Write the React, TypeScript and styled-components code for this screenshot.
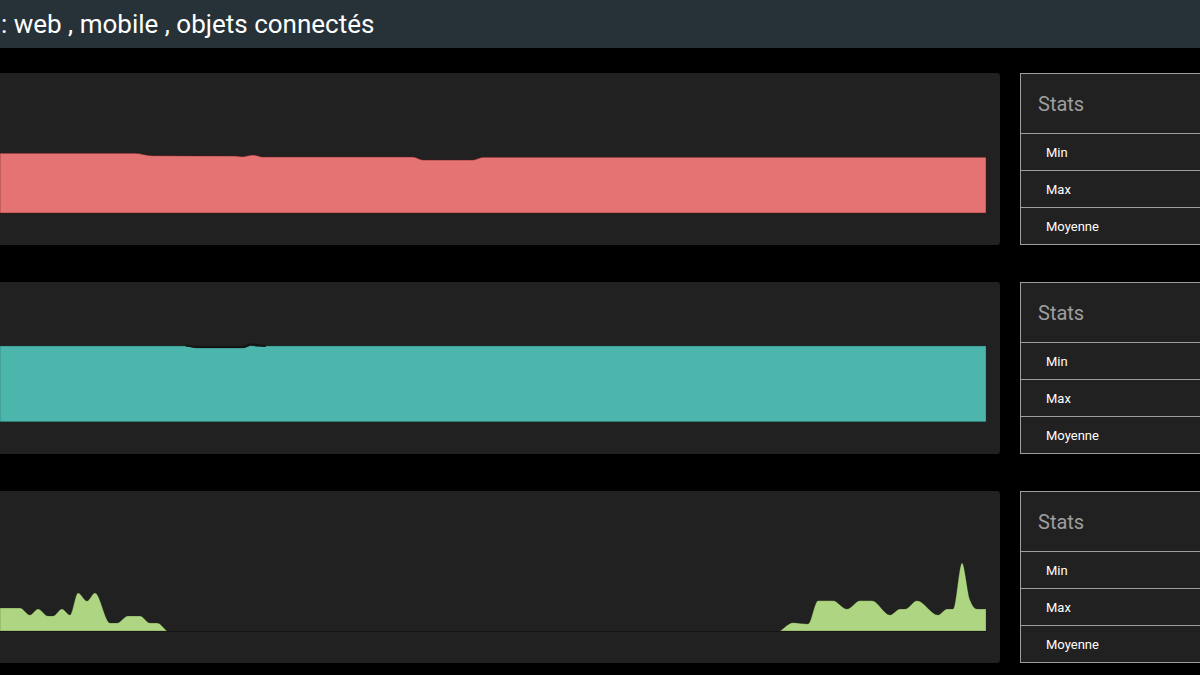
import React from "react";
import styled, { createGlobalStyle } from "styled-components";

const GlobalStyle = createGlobalStyle`
  html, body { margin: 0; padding: 0; background: #000; overflow: hidden; }
  body { font-family: Roboto, "Noto Sans", Arial, sans-serif; }
  #root { width: 1200px; height: 675px; overflow: hidden; }
`;

type Pt = [number, number];

function monotone(pts: Pt[]): string {
  const n = pts.length;
  const s: number[] = [];
  for (let i = 0; i < n - 1; i++) {
    s.push((pts[i + 1][1] - pts[i][1]) / (pts[i + 1][0] - pts[i][0]));
  }
  const t: number[] = [];
  for (let i = 0; i < n; i++) {
    if (i === 0) t.push(s[0]);
    else if (i === n - 1) t.push(s[n - 2]);
    else {
      const h0 = pts[i][0] - pts[i - 1][0];
      const h1 = pts[i + 1][0] - pts[i][0];
      const s0 = s[i - 1];
      const s1 = s[i];
      const p = (s0 * h1 + s1 * h0) / (h0 + h1);
      const v = (Math.sign(s0) + Math.sign(s1)) * Math.min(Math.abs(s0), Math.abs(s1), 0.5 * Math.abs(p));
      t.push(v || 0);
    }
  }
  let d = `M${pts[0][0]},${pts[0][1]}`;
  for (let i = 0; i < n - 1; i++) {
    const [x0, y0] = pts[i];
    const [x1, y1] = pts[i + 1];
    const dx = (x1 - x0) / 3;
    d += ` C${x0 + dx},${y0 + dx * t[i]} ${x1 - dx},${y1 - dx * t[i + 1]} ${x1},${y1}`;
  }
  return d;
}

function area(pts: Pt[], base: number): string {
  const first = pts[0];
  const last = pts[pts.length - 1];
  return `M${first[0]},${base} L${first[0]},${first[1]} ` + monotone(pts).replace(/^M[^ ]+/, "") + ` L${last[0]},${base} Z`;
}

const Header = styled.header`
  height: 48px;
  background: #263238;
  display: flex;
  align-items: center;
  padding-left: 1px;
`;

const Title = styled.h1`
  margin: 0;
  font-family: Roboto, "Noto Sans", sans-serif;
  font-weight: 400;
  font-size: 26px;
  color: #fff;
  white-space: nowrap;
`;

const Content = styled.main`
  display: flex;
  flex-direction: column;
  gap: 37px;
  padding-top: 25px;
`;

const Row = styled.section`
  display: flex;
  gap: 20px;
  height: 172px;
`;

const ChartPanel = styled.div`
  width: 1000px;
  flex: none;
  height: 172px;
  background: #212121;
  border-radius: 0 3px 3px 0;
  overflow: hidden;
`;

const ChartSvg = styled.svg`
  display: block;
  width: 1000px;
  height: 172px;
`;

const StatsPanel = styled.div`
  width: 300px;
  flex: none;
  box-sizing: border-box;
  border: 1px solid #9e9e9e;
  background: #212121;
  display: flex;
  flex-direction: column;
`;

const StatsTitle = styled.div`
  height: 59px;
  display: flex;
  align-items: center;
  padding-left: 17px;
  font-family: Roboto, sans-serif;
  font-size: 20px;
  color: #9e9e9e;
  box-sizing: border-box;
`;

const StatRow = styled.div`
  height: 37px;
  box-sizing: border-box;
  border-top: 1px solid #9e9e9e;
  display: flex;
  align-items: center;
  padding-left: 25px;
  font-family: Roboto, sans-serif;
  font-size: 13px;
  color: #fff;
`;

const chart1: Pt[] = [
  [0, 80.3], [135, 80.3], [152, 82.7], [235, 83], [242, 83.7], [253, 82], [263, 84],
  [413, 84], [423, 87], [473, 87], [483, 84.3], [986, 84.3],
];

const chart2: Pt[] = [
  [0, 64], [188, 64], [197, 66], [243, 66], [251, 63.5], [258, 64.5], [266, 64], [986, 64],
];
const chart2Dark: Pt[] = [
  [186, 63.5], [196, 65], [243, 65], [251, 62.5], [257, 63], [265, 64],
];

const chart3a: Pt[] = [
  [0, 117], [20, 117], [30, 124], [38, 118], [48, 125], [53, 125], [62, 118], [70, 124],
  [78, 102], [87, 110], [95, 102], [110, 132], [117, 132], [128, 125], [140, 125],
  [150, 132], [157, 132], [167, 140],
];
const chart3b: Pt[] = [
  [780, 140], [793, 131.7], [808, 133], [818, 109.7], [833, 109.7], [847, 118], [860, 109.7],
  [872, 109.7], [890, 124], [900, 118], [905, 118], [917, 109.7], [938, 124], [947, 118],
  [953, 118], [962, 72], [970, 109], [977, 118], [986, 118],
];

function Stats() {
  return (
    <StatsPanel>
      <StatsTitle>Stats</StatsTitle>
      <StatRow>Min</StatRow>
      <StatRow>Max</StatRow>
      <StatRow>Moyenne</StatRow>
    </StatsPanel>
  );
}

export default function App() {
  return (
    <>
      <GlobalStyle />
      <Header>
        <Title>: web , mobile , objets connectés</Title>
      </Header>
      <Content>
        <Row>
          <ChartPanel>
            <ChartSvg viewBox="0 0 1000 172">
              <path d={area(chart1, 140)} fill="#e57373" stroke="rgba(90,20,20,0.45)" strokeWidth={1} />
            </ChartSvg>
          </ChartPanel>
          <Stats />
        </Row>
        <Row>
          <ChartPanel>
            <ChartSvg viewBox="0 0 1000 172">
              <path d={area(chart2, 139.7)} fill="#4db6ac" stroke="rgba(20,70,65,0.35)" strokeWidth={1} />
              <path d={monotone(chart2Dark)} fill="none" stroke="#141414" strokeWidth={2} strokeLinecap="round" />
            </ChartSvg>
          </ChartPanel>
          <Stats />
        </Row>
        <Row>
          <ChartPanel>
            <ChartSvg viewBox="0 0 1000 172">
              <line x1={0} x2={1000} y1={64} y2={64} stroke="#252525" strokeWidth={1} />
              <line x1={0} x2={1000} y1={111} y2={111} stroke="#252525" strokeWidth={1} />
              <line x1={0} x2={986} y1={140.5} y2={140.5} stroke="#141414" strokeWidth={1} />
              <path d={area(chart3a, 140)} fill="#aed581" stroke="rgba(40,60,20,0.35)" strokeWidth={0.8} />
              <path d={area(chart3b, 140)} fill="#aed581" stroke="rgba(40,60,20,0.35)" strokeWidth={0.8} />
            </ChartSvg>
          </ChartPanel>
          <Stats />
        </Row>
      </Content>
    </>
  );
}
